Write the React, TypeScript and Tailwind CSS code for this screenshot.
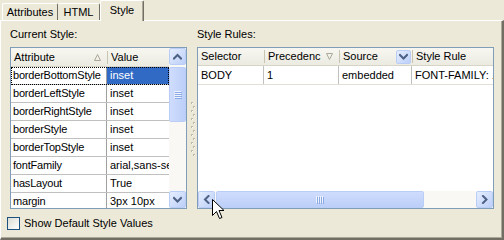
import React from "react";

const Chev = ({ dir }: { dir: "up" | "down" | "left" | "right" }) => {
  const d =
    dir === "up"
      ? "M1 5.5 L4.5 2 L8 5.5"
      : dir === "down"
      ? "M1 2 L4.5 5.5 L8 2"
      : dir === "left"
      ? "M5.5 1 L2 4.5 L5.5 8"
      : "M2 1 L5.5 4.5 L2 8";
  const w = dir === "up" || dir === "down" ? 9 : 8;
  const h = dir === "up" || dir === "down" ? 8 : 9;
  return (
    <svg width={w} height={h} viewBox={`0 0 ${w} ${h}`}>
      <path d={d} stroke="#4d6185" strokeWidth="2" fill="none" strokeLinecap="square" />
    </svg>
  );
};

const SbBtn = ({ dir }: { dir: "up" | "down" | "left" | "right" }) => (
  <div className="flex h-[17px] w-[17px] shrink-0 items-center justify-center rounded-[2px] border border-[#b9cdf6] bg-[linear-gradient(135deg,#e6eefe,#bccff8)]">
    <Chev dir={dir} />
  </div>
);

const GripV = () => (
  <svg width="8" height="8" viewBox="0 0 8 8">
    {[0, 2, 4, 6].map((y) => (
      <g key={y}>
        <rect x="0" y={y} width="7" height="1" fill="#eef3fe" />
        <rect x="1" y={y + 1} width="7" height="1" fill="#8caae8" />
      </g>
    ))}
  </svg>
);

const GripH = () => (
  <svg width="8" height="8" viewBox="0 0 8 8">
    {[0, 2, 4, 6].map((x) => (
      <g key={x}>
        <rect x={x} y="0" width="1" height="7" fill="#eef3fe" />
        <rect x={x + 1} y="1" width="1" height="7" fill="#8caae8" />
      </g>
    ))}
  </svg>
);

const Tri = ({ up }: { up: boolean }) => (
  <svg width="7" height="7" viewBox="0 0 7 7">
    <path d={up ? "M3.5 0.5 L6.5 6.5 L0.5 6.5 Z" : "M0.5 0.5 L6.5 0.5 L3.5 6.5 Z"} fill="none" stroke="#aca899" strokeWidth="1" />
  </svg>
);

const rows: [string, string][] = [
  ["borderBottomStyle", "inset"],
  ["borderLeftStyle", "inset"],
  ["borderRightStyle", "inset"],
  ["borderStyle", "inset"],
  ["borderTopStyle", "inset"],
  ["fontFamily", "arial,sans-serif"],
  ["hasLayout", "True"],
  ["margin", "3px 10px"],
];

const Sep = () => <div className="h-[13px] w-px shrink-0 bg-[#c7c5b2]" />;

export default function App() {
  return (
    <div className="relative h-[240px] w-[504px] overflow-hidden bg-[#ece9d8] text-[11px] leading-[13px] text-black font-['Liberation_Sans',Arial,sans-serif]">
      {/* tabs */}
      <div className="flex h-[20px] items-end pl-[2px]">
        <div className="flex h-[17px] w-[56px] items-center justify-center rounded-t-[2px] border-l border-t border-r border-l-white border-t-white border-r-[#716f64]">
          Attributes
        </div>
        <div className="flex h-[17px] w-[42px] items-center justify-center rounded-t-[2px] border-t border-r border-t-white border-r-[#716f64]">
          HTML
        </div>
        <div className="relative z-10 -mb-px flex h-[21px] w-[44px] items-start justify-center rounded-t-[2px] border-l border-t border-r border-l-white border-t-white border-r-[#716f64] bg-[#ece9d8] pt-[3px] shadow-[inset_-1px_0_0_#aca899]">
          Style
        </div>
      </div>

      {/* panel */}
      <div className="flex h-[220px] flex-col border-l border-t border-r-2 border-b-2 border-l-white border-t-white border-r-[#716f64] border-b-[#716f64] shadow-[inset_-1px_-1px_0_#aca899]">
        <div className="flex pl-[9px] pt-[7px]">
          {/* left */}
          <div className="flex w-[177px] flex-col">
            <div className="mb-[6px] h-[13px]">Current Style:</div>
            <div className="flex h-[162px] w-[177px] border border-[#7f9db9] bg-white">
              <div className="flex w-[158px] flex-col overflow-hidden">
                <div className="flex h-[19px] shrink-0 items-center border-b border-[#d8d5c6] bg-[linear-gradient(#f7f6f0,#ecebe2)]">
                  <div className="flex w-[96px] items-center justify-between pl-[3px] pr-[6px]">
                    <span>Attribute</span>
                    <Tri up />
                  </div>
                  <Sep />
                  <div className="pl-[3px]">Value</div>
                </div>
                {rows.map(([a, v], i) => (
                  <div
                    key={a}
                    className={
                      "flex h-[18px] shrink-0 border-b border-[#c0c0c0] " +
                      (i === 0 ? "outline-1 outline-dotted outline-black -outline-offset-1" : "")
                    }
                  >
                    <div className="flex w-[96px] shrink-0 items-center whitespace-nowrap border-r border-[#a0a0a0] pl-[2px] tracking-[-0.2px]">
                      {a}
                    </div>
                    <div
                      className={
                        "flex min-w-0 flex-1 items-center overflow-hidden whitespace-nowrap pl-[3px] " +
                        (i === 0 ? "bg-[#316ac5] text-white" : "")
                      }
                    >
                      {v}
                    </div>
                  </div>
                ))}
              </div>
              {/* vertical scrollbar */}
              <div className="flex w-[17px] flex-col bg-[#f9f8f4]">
                <SbBtn dir="up" />
                <div className="flex-1">
                  <div className="mt-[2px] flex h-[55px] items-center justify-center rounded-[2px] border border-[#b9cdf6] bg-[linear-gradient(90deg,#cfdcfd,#bccff8)]">
                    <GripV />
                  </div>
                </div>
                <SbBtn dir="down" />
              </div>
            </div>
          </div>

          {/* splitter */}
          <div className="flex w-[10px] justify-center pt-[74px] pl-[2px]">
            <svg width="5" height="56" viewBox="0 0 5 56">
              {Array.from({ length: 14 }).map((_, i) => (
                <g key={i}>
                  <rect x={i % 2 === 0 ? 0 : 2} y={i * 4} width="2" height="2" fill="#bcb8a6" />
                  <rect x={i % 2 === 0 ? 1 : 3} y={i * 4 + 1} width="1" height="1" fill="#ffffff" />
                </g>
              ))}
            </svg>
          </div>

          {/* right */}
          <div className="flex w-[297px] flex-col">
            <div className="mb-[6px] h-[13px]">Style Rules:</div>
            <div className="flex h-[162px] w-[297px] flex-col border border-[#7f9db9] bg-white">
              <div className="flex-1 overflow-hidden">
                <div className="flex h-[18px] items-center border-b border-[#d8d5c6] bg-[linear-gradient(#f7f6f0,#ecebe2)] whitespace-nowrap">
                  <div className="w-[66px] pl-[3px]">Selector</div>
                  <Sep />
                  <div className="flex w-[74px] items-center justify-between pl-[3px] pr-[6px]">
                    <span>Precedenc</span>
                    <Tri up={false} />
                  </div>
                  <Sep />
                  <div className="flex w-[72px] items-center justify-between pl-[3px] pr-[1px]">
                    <span>Source</span>
                    <div className="flex h-[14px] w-[15px] items-center justify-center rounded-[2px] border border-[#b9cdf6] bg-[linear-gradient(135deg,#e6eefe,#bccff8)]">
                      <Chev dir="down" />
                    </div>
                  </div>
                  <Sep />
                  <div className="pl-[3px]">Style Rule</div>
                </div>
                <div className="flex h-[19px] items-center border-b border-[#e2e0d6] whitespace-nowrap">
                  <div className="flex h-full w-[66px] items-center border-r border-[#c0c0c0] pl-[3px]">BODY</div>
                  <div className="flex h-full w-[75px] items-center border-r border-[#c0c0c0] pl-[3px]">1</div>
                  <div className="flex h-full w-[73px] items-center border-r border-[#c0c0c0] pl-[3px]">embedded</div>
                  <div className="flex h-full flex-1 items-center overflow-hidden pl-[3px]">FONT-FAMILY: .</div>
                </div>
              </div>
              {/* horizontal scrollbar */}
              <div className="flex h-[17px] shrink-0 bg-[#f9f8f4]">
                <SbBtn dir="left" />
                <div className="ml-[1px] flex h-[17px] w-[208px] items-center justify-center rounded-[2px] border border-[#b9cdf6] bg-[linear-gradient(#cfdcfd,#bccff8)]">
                  <GripH />
                </div>
                <div className="flex-1" />
                <SbBtn dir="right" />
              </div>
            </div>
          </div>
        </div>

        {/* checkbox */}
        <div className="mt-[8px] flex items-center pl-[6px]">
          <div className="h-[13px] w-[13px] border border-[#1c5180] bg-[linear-gradient(135deg,#dcdcd5,#ffffff)]" />
          <span className="ml-[4px]">Show Default Style Values</span>
        </div>
      </div>

      {/* mouse cursor */}
      <svg className="absolute left-[212px] top-[199px]" width="13" height="21" viewBox="0 0 13 21">
        <path d="M0.5 0.5 L0.5 16.5 L4.5 12.5 L7.5 19.5 L10 18.5 L7 11.5 L12 11.5 Z" fill="#fff" stroke="#000" strokeWidth="1" />
      </svg>
    </div>
  );
}
